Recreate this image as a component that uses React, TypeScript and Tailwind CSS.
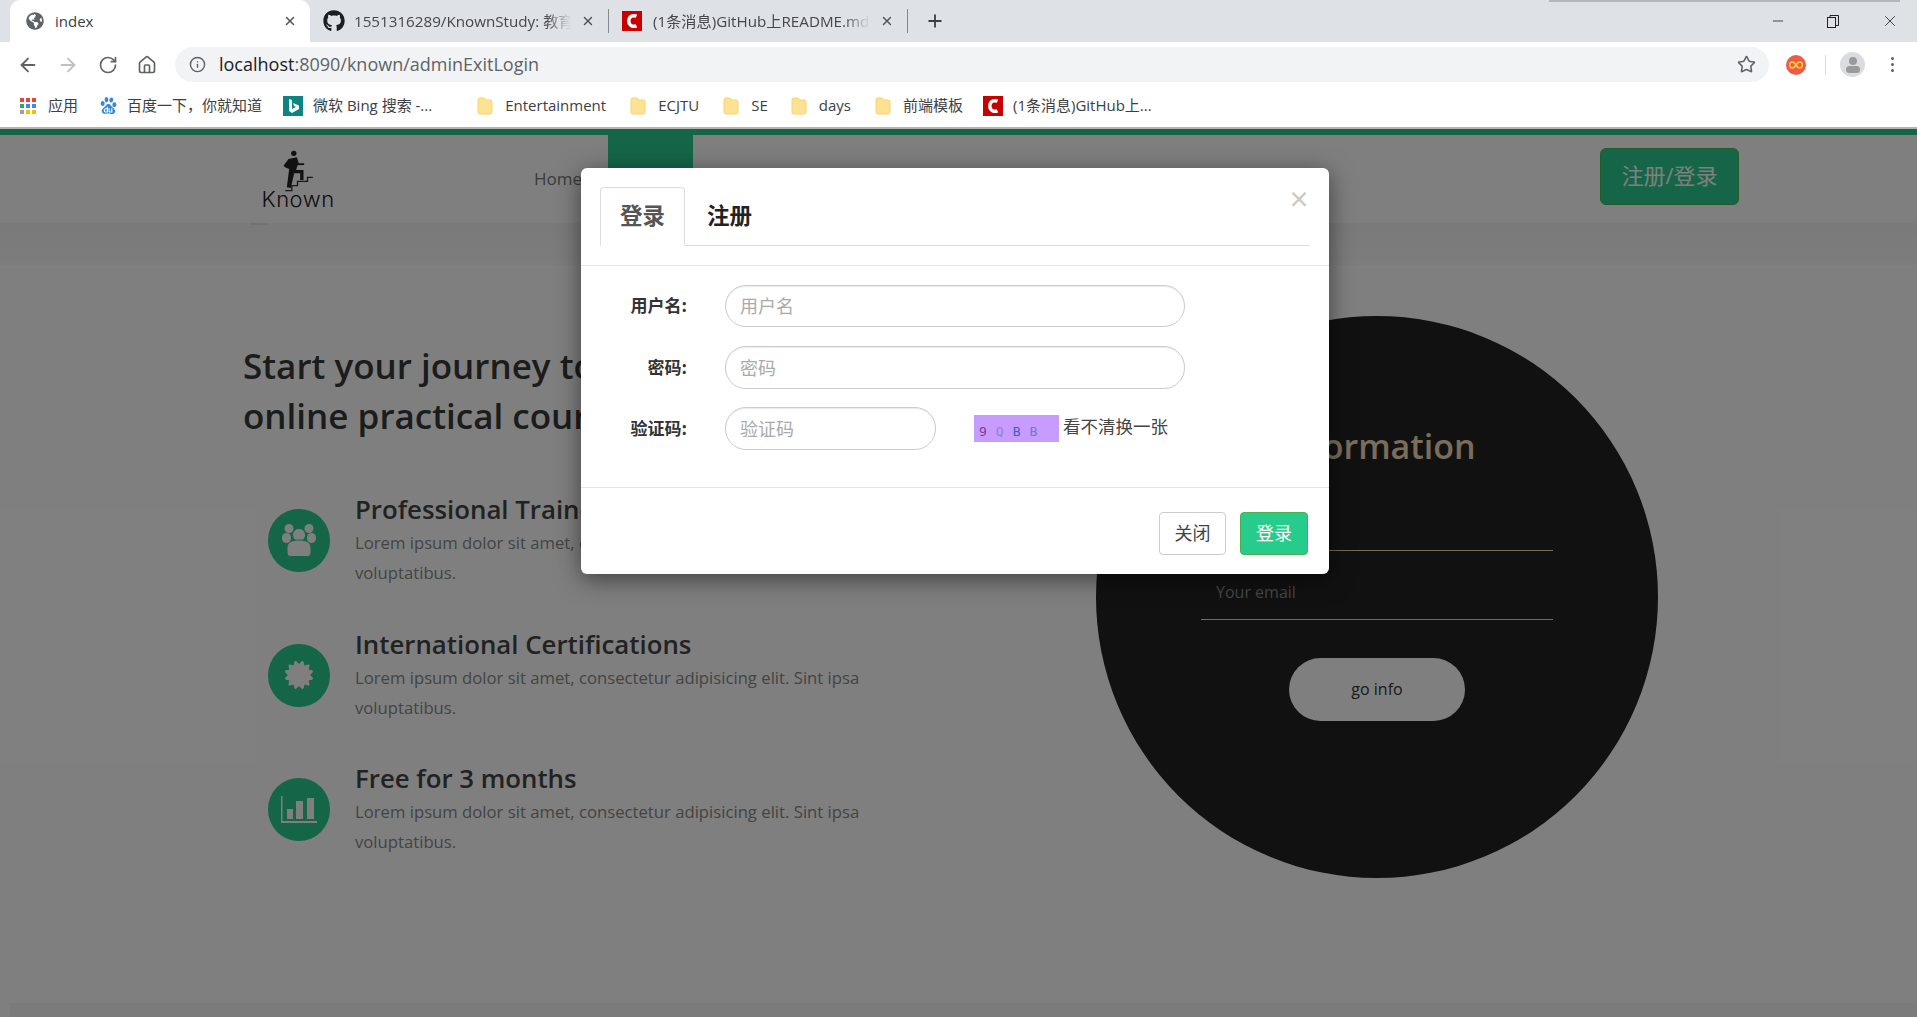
import React from 'react';
import { ArrowLeft, ArrowRight, RotateCw, House, Info, Star, X, Plus, Minus } from 'lucide-react';
import { FaGithub, FaGlobeAmericas, FaCertificate } from 'react-icons/fa';
import { SiBaidu } from 'react-icons/si';

const CsdnIcon = ({ size = 20 }: { size?: number }) => (
  <svg width={size} height={size} viewBox="0 0 20 20" className="shrink-0">
    <rect width="20" height="20" fill="#c90000" />
    <path d="M14.5 5.2C11 3.8 6.8 5.4 6.8 10s4.2 6.2 7.7 4.8" fill="none" stroke="#fff" strokeWidth="3.4" />
  </svg>
);

const Folder = () => (
  <svg width="16" height="18" viewBox="0 0 16 18" className="shrink-0">
    <path d="M1 3a2 2 0 0 1 2-2h4l2 2h4a2 2 0 0 1 2 2v10a2 2 0 0 1-2 2H3a2 2 0 0 1-2-2z" fill="#fde293" stroke="#fbd465" />
  </svg>
);

const AppsGrid = () => {
  const colors = ['#ea4335', '#ea4335', '#ea4335', '#34a853', '#4285f4', '#4285f4', '#9e9e9e', '#fbbc04', '#fbbc04'];
  return (
    <div className="grid h-[16px] w-[16px] shrink-0 grid-cols-3 gap-[2px]">
      {colors.map((c, i) => (
        <div key={i} className="h-[4px] w-[4px]" style={{ backgroundColor: c }} />
      ))}
    </div>
  );
};

const BingIcon = () => (
  <svg width="20" height="20" viewBox="0 0 20 20" className="shrink-0">
    <rect width="20" height="20" fill="#0d8484" />
    <path d="M6 3l3 1v9l4-2-2-1-1-3 6 2.500v3.500l-7 4-3-2z" fill="#fff" />
  </svg>
);

const Tab = ({ icon, title, gap }: { icon: React.ReactNode; title: string; gap: string }) => (
  <div className="flex w-[299px] items-center pl-[13px]">
    {icon}
    <div className={`${gap} w-[218px] overflow-hidden whitespace-nowrap text-[15.200px] text-[#45474a] [mask-image:linear-gradient(to_right,black_88%,transparent)]`}>
      {title}
    </div>
    <X size={14} strokeWidth={2.5} className="ml-[10px] text-[#50535a]" />
    <div className="ml-[13px] h-[24px] w-px bg-[#85888c]" />
  </div>
);

const BrowserChrome = () => (
  <div className="font-['Open_Sans','Noto_Sans_CJK_SC',sans-serif]">
    <div className="relative flex h-[42px] bg-[#dee1e6]">
      <div className="absolute right-[17px] top-0 h-[2px] w-[351px] bg-[#b6b7ba]" />
      <div className="ml-[10px] flex h-full w-[300px] items-center rounded-t-[10px] bg-white pl-[16px] pr-[13px]">
        <FaGlobeAmericas size={18} className="text-[#5f6368]" />
        <span className="ml-[11px] text-[15px] text-[#3c4043]">index</span>
        <X size={14} strokeWidth={2.5} className="ml-auto text-[#50535a]" />
      </div>
      <Tab gap="ml-[9px]" icon={<FaGithub size={22} className="shrink-0 text-[#1b1f23]" />} title="1551316289/KnownStudy: 教育平台" />
      <Tab gap="ml-[11px]" icon={<CsdnIcon />} title="(1条消息)GitHub上README.md教程" />
      <Plus size={20} strokeWidth={2.2} className="ml-[17px] self-center text-[#3c4043]" />
      <div className="ml-auto flex items-center text-[#222]">
        <div className="flex w-[50px] justify-center">
          <Minus size={16} strokeWidth={1.2} />
        </div>
        <div className="flex w-[60px] justify-center">
          <svg width="12" height="13" viewBox="0 0 12 13" fill="none" stroke="currentColor">
            <rect x="0.500" y="2.500" width="8" height="10" />
            <path d="M3 2.500V.5h8.500v10H8.500" />
          </svg>
        </div>
        <div className="flex w-[54px] justify-center">
          <X size={18} strokeWidth={1.1} />
        </div>
      </div>
    </div>

    <div className="flex h-[44px] items-center bg-white pl-[8px] pt-[1px] text-[#5f6368]">
      <div className="flex w-[40px] justify-center"><ArrowLeft size={22} strokeWidth={2} /></div>
      <div className="flex w-[40px] justify-center text-[#bdc1c6]"><ArrowRight size={22} strokeWidth={2} /></div>
      <div className="flex w-[40px] justify-center"><RotateCw size={20} strokeWidth={2} /></div>
      <div className="flex w-[40px] justify-center pr-[2px]"><House size={20} strokeWidth={2} /></div>
      <div className="ml-[7px] flex h-[35px] w-[1594px] items-center rounded-full bg-[#f1f3f4] pl-[14px] pr-[13px]">
        <Info size={17} strokeWidth={2} />
        <span className="ml-[13px] text-[18px] text-[#202124]">
          localhost<span className="text-[#5f6368]">:8090/known/adminExitLogin</span>
        </span>
        <Star size={19} strokeWidth={2} className="ml-auto text-[#5f6368]" />
      </div>
      <div className="ml-[17px] flex h-[20px] w-[20px] items-center justify-center rounded-full bg-[#ef5b4b]">
        <svg width="14" height="8" viewBox="0 0 14 8" fill="none" stroke="#fdd835" strokeWidth="1.500">
          <path d="M7 4C5.500 1.500 4.500 1 3.500 1a3 3 0 0 0 0 6c1 0 2-.5 3.500-3s2.500-3 3.500-3a3 3 0 0 1 0 6c-1 0-2-.5-3.500-3z" />
        </svg>
      </div>
      <div className="ml-[19px] h-[20px] w-px bg-[#dadce0]" />
      <div className="ml-[14px] flex h-[25px] w-[25px] flex-col items-center justify-center gap-[1px] rounded-full bg-[#dadce0]">
        <div className="h-[8px] w-[8px] rounded-full bg-[#9a9a9a]" />
        <div className="h-[7px] w-[14px] rounded-full bg-[#9a9a9a]" />
      </div>
      <div className="ml-[26px] flex flex-col gap-[3px]">
        <div className="h-[3px] w-[3px] rounded-full bg-[#5f6368]" />
        <div className="h-[3px] w-[3px] rounded-full bg-[#5f6368]" />
        <div className="h-[3px] w-[3px] rounded-full bg-[#5f6368]" />
      </div>
    </div>

    <div className="flex h-[41px] items-center bg-white pb-[2px] pl-[20px] text-[15px] text-[#3c4043]">
      <AppsGrid />
      <span className="ml-[12px]">应用</span>
      <SiBaidu size={17} className="ml-[22px] shrink-0 text-[#3388e0]" />
      <span className="ml-[10px]">百度一下，你就知道</span>
      <div className="ml-[21px]"><BingIcon /></div>
      <span className="ml-[10px]">微软 Bing 搜索 -...</span>
      <div className="ml-[45px]"><Folder /></div>
      <span className="ml-[12px]">Entertainment</span>
      <div className="ml-[24px]"><Folder /></div>
      <span className="ml-[12px]">ECJTU</span>
      <div className="ml-[24px]"><Folder /></div>
      <span className="ml-[12px]">SE</span>
      <div className="ml-[23px]"><Folder /></div>
      <span className="ml-[12px]">days</span>
      <div className="ml-[24px]"><Folder /></div>
      <span className="ml-[12px]">前端模板</span>
      <div className="ml-[20px]"><CsdnIcon /></div>
      <span className="ml-[10px]">(1条消息)GitHub上...</span>
    </div>
    <div className="h-[2px] bg-[#b4b4b4]" />
  </div>
);

const UsersIcon = () => (
  <svg width="34" height="33" viewBox="0 0 34 33" fill="currentColor">
    <circle cx="7" cy="4.500" r="4.500" />
    <circle cx="27" cy="4.500" r="4.500" />
    <rect x="0" y="9" width="9" height="10" rx="4.500" />
    <rect x="25" y="9" width="9" height="10" rx="4.500" />
    <circle cx="17" cy="11" r="6.500" stroke="#2acc90" strokeWidth="1" />
    <path d="M5 24c0-6 5-8 12-8s12 2 12 8v5a3.500 3.500 0 0 1-3.500 3.500h-17A3.500 3.500 0 0 1 5 29z" stroke="#2acc90" strokeWidth="1" />
  </svg>
);

const ChartIcon = () => (
  <svg width="36" height="27" viewBox="0 0 36 27" fill="currentColor">
    <rect x="0" y="0" width="1.500" height="27" />
    <rect x="0" y="25" width="36" height="2" />
    <rect x="6" y="13" width="6" height="10" />
    <rect x="15" y="5" width="7" height="18" />
    <rect x="26" y="2" width="7" height="21" />
  </svg>
);

const features = [
  { title: 'Professional Trainers', icon: <UsersIcon /> },
  { title: 'International Certifications', icon: <FaCertificate size={28} /> },
  { title: 'Free for 3 months', icon: <ChartIcon /> },
];

const Feature = ({ title, icon }: { title: string; icon: React.ReactNode }) => (
  <div className="flex">
    <div className="mt-[16px] flex h-[63px] w-[62px] shrink-0 items-center justify-center rounded-full bg-[#2acc90] text-white">
      {icon}
    </div>
    <div className="ml-[25px] w-[540px]">
      <h3 className="mb-[3px] text-[25.800px] font-semibold leading-[32px] text-[#444]">{title}</h3>
      <p className="text-[16.700px] leading-[30px] text-[#888]">
        Lorem ipsum dolor sit amet, consectetur adipisicing elit. Sint ipsa voluptatibus.
      </p>
    </div>
  </div>
);

const Logo = () => (
  <div className="flex w-[70px] flex-col items-center">
    <svg width="37" height="45" viewBox="180 55 110 135" className="-mb-[6px]">
      <circle cx="221" cy="68" r="8" fill="#222" />
      <path d="M205 85L230 80L236 98L252 98L252 103L232 104L228 118L250 118L250 148L240 148L240 128L222 128L212 172L200 170L207 115L195 110L190 105z" fill="#222" />
      <path d="M195 180H215V165H232V152H262V140H278" fill="none" stroke="#333" strokeWidth="4" />
    </svg>
    <span className="font-['Inter',sans-serif] text-[22px] font-light leading-[22px] tracking-[0.5px] text-[#222]">Known</span>
  </div>
);

const PageBehind = () => (
  <div className="font-['Open_Sans','Noto_Sans_CJK_SC',sans-serif]">
    <div className="h-[6px] bg-[#2acc90]" />
    <nav className="flex h-[88px] items-stretch bg-white">
      <div className="ml-[263px] self-center"><Logo /></div>
      <span className="ml-[201px] self-center text-[17px] text-[#777]">Home</span>
      <div className="ml-[26px] h-full w-[85px] bg-[#2acc90]" />
      <button className="ml-auto mr-[178px] mb-[5px] h-[57px] w-[139px] self-center rounded-[6px] border border-[#4fb54f] bg-[#2acc90] pb-[2px] text-[22px] text-white">
        注册/登录
      </button>
    </nav>
    <div className="h-[42px] bg-gradient-to-b from-[#f4f4f4] to-[#fafafa]">
      <div className="ml-[250px] h-[2px] w-[17px] bg-[#e4e4e4]" />
    </div>
    <div className="flex bg-white pl-[243px]">
      <div className="w-[853px] pt-[76px]">
        <h1 className="text-[35px] font-semibold leading-[50px] text-[#383838]">
          Start your journey to a better life with
          <br />
          online practical courses
        </h1>
        <div className="ml-[25px] mt-[52px] flex flex-col gap-[39.500px]">
          {features.map((f) => (
            <Feature key={f.title} title={f.title} icon={f.icon} />
          ))}
        </div>
      </div>
      <div className="mt-[51px] flex h-[562px] w-[562px] flex-col items-center rounded-full bg-[#222] pt-[105px]">
        <h2 className="text-[34px] font-semibold leading-[50px] text-[#f5dcb4]">Information</h2>
        <div className="mt-[24px] h-[56px] w-[352px] border-b border-[#f0d8ae] pl-[15px] pt-[12px] text-[16px] text-[#8c8c8c]">Your name</div>
        <div className="mt-[13px] h-[56px] w-[352px] border-b border-[#f0d8ae] pl-[15px] pt-[16px] text-[16px] text-[#8c8c8c]">Your email</div>
        <button className="mt-[38px] h-[63px] w-[176px] rounded-full bg-white pb-[2px] text-[16px] text-[#333]">go info</button>
      </div>
    </div>
    <div className="mt-[125px] ml-[10px] h-[14px] bg-[#f7f7f7]" />
  </div>
);

const inputClass =
  'ml-[38px] rounded-[21px] border border-[#ccc] pb-[2px] px-[14px] text-[18px] shadow-[inset_0_1px_1px_rgba(0,0,0,0.08)] placeholder:text-[#aaa]';

const LoginModal = () => (
  <div className="absolute inset-0 bg-black/50 pl-[581px] pt-[39px] font-['Noto_Sans_CJK_SC',sans-serif]">
    <div className="w-[748px] rounded-[6px] bg-white shadow-[0_5px_25px_rgba(0,0,0,0.5)]">
      <div className="relative border-b border-[#e5e5e5] px-[19px] pb-[19px] pt-[19px]">
        <span className="absolute right-[19px] top-[15px] text-[22px] font-bold leading-[28px] text-[#c8c8c8]">×</span>
        <div className="flex h-[59px] border-b border-[#ddd]">
          <div className="-mb-px flex w-[85px] items-center justify-center rounded-t-[4px] border border-b-white border-[#ddd] bg-white pb-[3px] text-[22.500px] font-bold text-[#555]">
            登录
          </div>
          <div className="ml-[1px] flex w-[87px] items-center justify-center pb-[3px] text-[22.500px] font-bold text-[#222]">注册</div>
        </div>
      </div>
      <div className="flex flex-col gap-[19px] pb-[37px] pt-[19px] text-[17px]">
        <div className="flex items-center">
          <label className="w-[106px] pb-[3px] text-right font-bold text-[#333]">用户名:</label>
          <input className={`${inputClass} h-[42px] w-[460px]`} placeholder="用户名" />
        </div>
        <div className="flex items-center">
          <label className="w-[106px] pb-[2px] text-right font-bold text-[#333]">密码:</label>
          <input className={`${inputClass} h-[43px] w-[460px]`} placeholder="密码" />
        </div>
        <div className="-mt-[1px] flex items-center">
          <label className="w-[106px] pb-[2px] text-right font-bold text-[#333]">验证码:</label>
          <input className={`${inputClass} h-[43px] w-[211px]`} placeholder="验证码" />
          <div className="ml-[38px] flex h-[27px] w-[85px] items-end gap-[9px] bg-[#c89bff] pb-[1px] pl-[5px] font-['DejaVu_Sans_Mono',monospace] text-[13px] leading-[18px]">
            <span className="text-[#7a3f8a]">9</span>
            <span className="text-[#8a7fe0]">Q</span>
            <span className="text-[#3a5fc0]">B</span>
            <span className="text-[#5a7fe0]">B</span>
          </div>
          <span className="ml-[4px] -mt-[5px] text-[17.500px] text-[#444]">看不清换一张</span>
        </div>
      </div>
      <div className="flex justify-end gap-[14px] border-t border-[#e5e5e5] pb-[19px] pr-[21px] pt-[24px] text-[18px]">
        <button className="h-[43px] w-[67px] rounded-[4px] border border-[#ccc] bg-white pb-[2px] text-[#444]">关闭</button>
        <button className="h-[43px] w-[68px] rounded-[4px] border border-[#4cae4c] bg-[#27cc8c] pb-[2px] text-white">登录</button>
      </div>
    </div>
  </div>
);

export default function App() {
  return (
    <div className="h-screen w-full overflow-hidden bg-white">
      <BrowserChrome />
      <div className="relative h-[888px] overflow-hidden">
        <PageBehind />
        <LoginModal />
      </div>
    </div>
  );
}
